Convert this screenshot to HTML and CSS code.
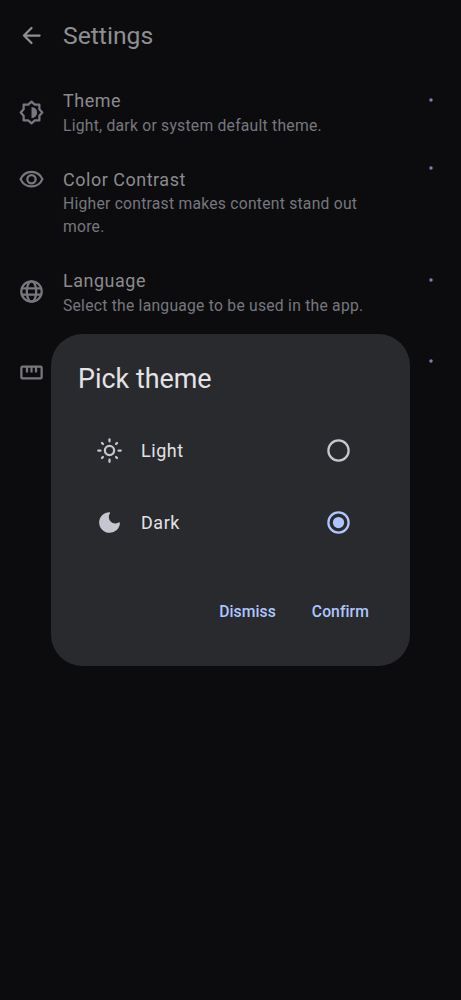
FILE: index.html
```html
<!DOCTYPE html>
<html lang="en">
<head>
<meta charset="utf-8">
<title>Settings</title>
<link rel="stylesheet" href="styles.css">
</head>
<body>
<div class="screen">
  <header class="topbar">
    <svg class="icon line" viewBox="0 0 24 24"><path stroke-linecap="round" stroke-linejoin="round" d="M19.200 12H5.500M12 5.300L5.300 12l6.700 6.700"/></svg>
    <h1 class="topbar-title">Settings</h1>
  </header>
  <main class="list">
    <div class="item">
      <svg class="icon line" viewBox="0 0 24 24"><path stroke-linejoin="round" d="M5 5h4.100L12 2.400 14.900 5H19v4.100L21.600 12 19 14.900V19h-4.100L12 21.600 9.100 19H5v-4.100L2.400 12 5 9.100z"/><path class="solid" d="M12 7v10a5 5 0 0 0 0-10z"/></svg>
      <div class="text"><div class="title">Theme</div><div class="sub">Light, dark or system default theme.</div></div>
      <svg class="dot" viewBox="0 0 6 6"><circle cx="3" cy="3" r="1.750"/></svg>
    </div>
    <div class="item item-top">
      <svg class="icon line" viewBox="0 0 24 24"><path stroke-linejoin="round" d="M2.300 11.700C4 7.900 7.700 5.200 12 5.200S20 7.900 21.700 11.700C20 15.500 16.300 18.200 12 18.200S4 15.500 2.300 11.700z"/><circle cx="12" cy="11.700" r="3.700"/></svg>
      <div class="text"><div class="title">Color Contrast</div><div class="sub">Higher contrast makes content stand out more.</div></div>
      <svg class="dot" viewBox="0 0 6 6"><circle cx="3" cy="3" r="1.750"/></svg>
    </div>
    <div class="item">
      <svg class="icon line" viewBox="0 0 24 24"><circle cx="12" cy="12" r="9.100"/><ellipse cx="12" cy="12" rx="4.200" ry="9"/><path d="M3.500 9.300h17M3.500 14.700h17"/></svg>
      <div class="text"><div class="title">Language</div><div class="sub">Select the language to be used in the app.</div></div>
      <svg class="dot" viewBox="0 0 6 6"><circle cx="3" cy="3" r="1.750"/></svg>
    </div>
    <div class="item">
      <svg class="icon line" viewBox="0 0 24 24"><rect x="3" y="6.800" width="18" height="10.400" rx="1"/><path d="M8 7v5M12 7v5M16 7v5"/></svg>
      <div class="text"></div>
      <svg class="dot" viewBox="0 0 6 6"><circle cx="3" cy="3" r="1.750"/></svg>
    </div>
  </main>
  <div class="scrim">
    <section class="dialog">
      <h2 class="dialog-title">Pick theme</h2>
      <div class="options">
        <div class="option">
          <svg class="icon line" viewBox="0 0 24 24"><circle cx="12" cy="12" r="4.100"/><path stroke-linecap="round" d="M12 2v1.800M12 20.200v1.800M2 12h2M20 12h2M5.300 5.300l.9.900M17.800 17.800l.9.900M5.300 18.700l.9-.9M17.800 6.200l.9-.9"/></svg>
          <span class="option-label">Light</span>
          <svg class="icon line radio" viewBox="0 0 24 24"><circle cx="12" cy="12" r="9"/></svg>
        </div>
        <div class="option">
          <svg class="icon" viewBox="0 0 24 24"><path d="M12 2.800c-5.080 0-9.200 4.120-9.200 9.200s4.120 9.200 9.200 9.200 9.200-4.030 9.200-8.500c0-.9-.5-1-1.100-.6-.9.500-1.900.8-3 .8-3.200 0-5.700-2.600-5.700-5.700 0-1.100.3-2.200.9-3.100.4-.7.200-1.300-.3-1.300z"/></svg>
          <span class="option-label">Dark</span>
          <svg class="icon line radio checked" viewBox="0 0 24 24"><circle cx="12" cy="12" r="9"/><circle class="solid" cx="12" cy="12" r="5"/></svg>
        </div>
      </div>
      <div class="actions"><span>Dismiss</span><span>Confirm</span></div>
    </section>
  </div>
</div>
</body>
</html>
```
FILE: styles.css
```css
* { box-sizing: border-box; }
body { margin: 0; background: #0c0c0e; font-family: Roboto, sans-serif; }
h1, h2 { margin: 0; font-weight: 400; }
.screen { position: relative; width: 461px; height: 1000px; overflow: hidden; }
.icon { width: 27px; height: 27px; flex: none; fill: currentColor; }
.icon.line { fill: none; stroke: currentColor; stroke-width: 2; }
.icon .solid { fill: currentColor; stroke: none; }
.topbar { height: 71.8px; padding-left: 18px; display: flex; align-items: center; gap: 18px; color: #8f8f92; }
.topbar-title { font-size: 24.7px; line-height: 31px; }
.item { display: flex; align-items: center; gap: 18px; height: 80.8px; padding: 13.5px 27px 13.5px 18px; color: #77777f; }
.item-top { height: 98.7px; align-items: flex-start; }
.text { flex: 1; max-width: 320px; }
.title { color: #8b8b8f; font-size: 17.95px; line-height: 27px; letter-spacing: .54px; }
.sub { padding-top: .7px; margin-bottom: -.7px; font-size: 15.7px; line-height: 22.45px; letter-spacing: .24px; }
.item-top .sub { padding-top: 0; }
.dot { width: 6px; height: 6px; fill: #7583b0; flex: none; align-self: flex-start; margin: 12px .5px 0 auto; }
.item-top .dot { margin-top: -1.2px; }
.scrim { position: absolute; inset: 0; display: flex; align-items: center; justify-content: center; }
.dialog { width: 359px; height: 332px; padding: 27px; border-radius: 31.4px; background: #292a2d; color: #e3e2e6; }
.dialog-title { font-size: 26.9px; line-height: 36px; }
.options { padding: 17.7px 18px 0; }
.option { display: flex; align-items: center; height: 71.9px; color: #c5c6d0; }
.option-label { flex: 1; margin-left: 18px; color: #e3e2e6; font-size: 17.95px; line-height: 27px; letter-spacing: .56px; }
.radio { margin-right: 13.5px; }
.checked { color: #adc6ff; }
.radio circle { stroke-width: 2; }
.actions { display: flex; justify-content: flex-end; gap: 36px; margin-top: 42.9px; padding-right: 14px; color: #adc6ff; font-size: 15.7px; line-height: 22px; font-weight: 500; letter-spacing: .08px; }
.radio .solid { stroke-width: 0; }
```
